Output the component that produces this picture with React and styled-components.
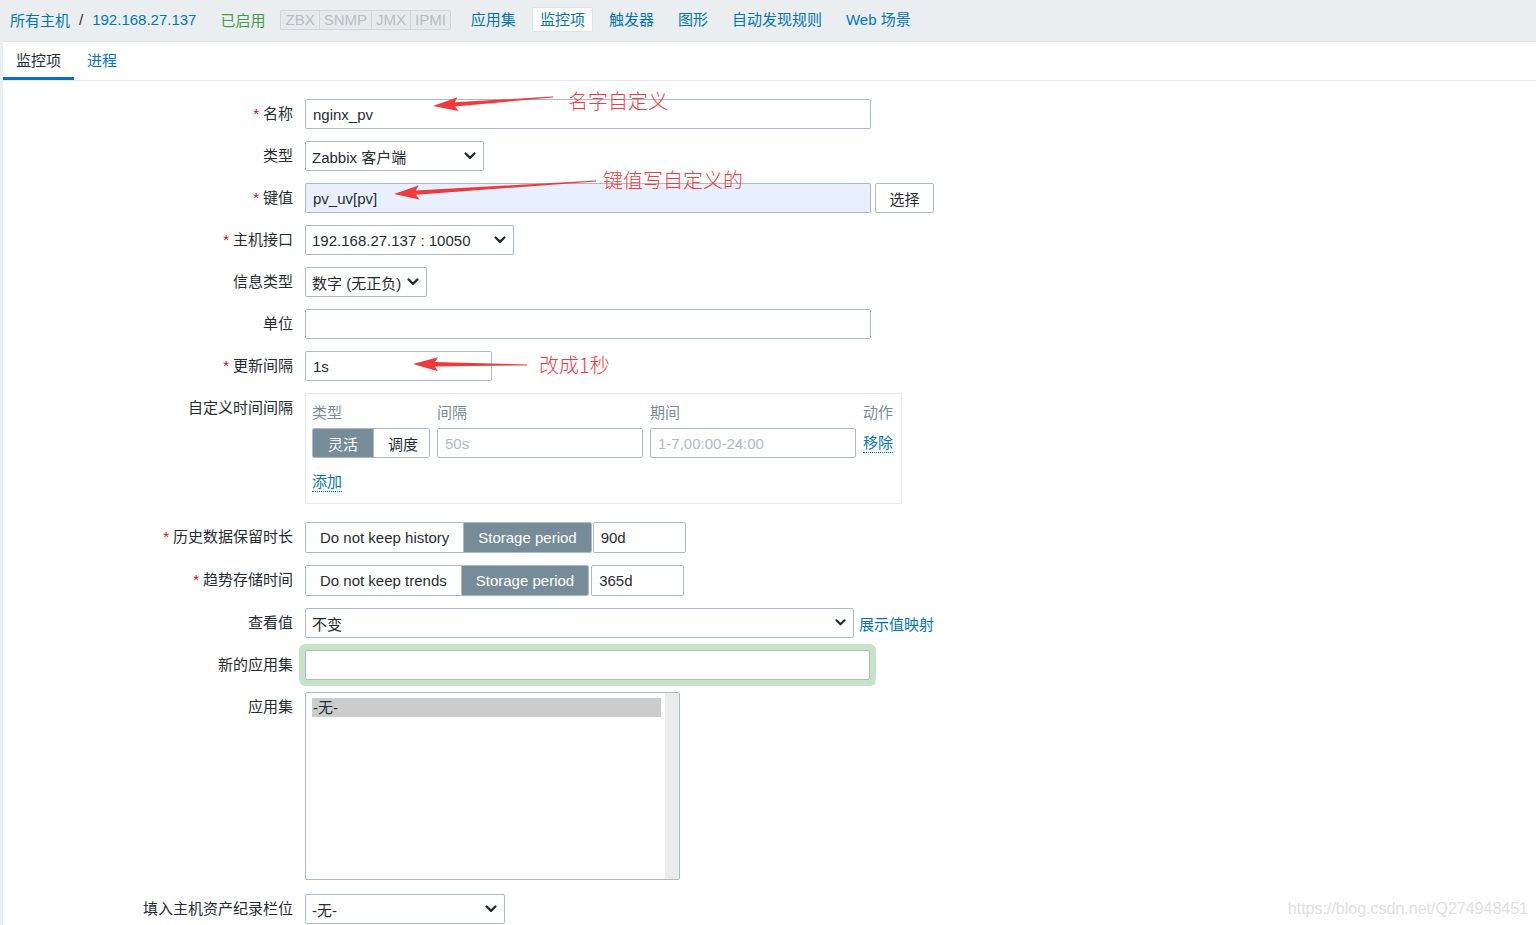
import React from "react";
import styled, { createGlobalStyle } from "styled-components";

const GlobalStyle = createGlobalStyle`
  html, body {
    margin: 0;
    padding: 0;
  }
  body {
    background: #ebeef0;
    font: 15px "Liberation Sans", "Noto Sans CJK SC", sans-serif;
    color: #1f2c33;
  }
  * {
    box-sizing: border-box;
  }
`;

const Chevron = ({ size = 12 }) => (
  <svg width={size} height={size * 0.65} viewBox="0 0 12 8" fill="none">
    <path d="M1.5 1.5 L6 6 L10.5 1.5" stroke="#1f2c33" strokeWidth="2.4" strokeLinecap="round" strokeLinejoin="round" />
  </svg>
);

const arrowPoints = (tx, ty, hx, hy) => {
  const len = Math.hypot(hx - tx, hy - ty);
  const ux = (hx - tx) / len;
  const uy = (hy - ty) / len;
  const nx = -uy;
  const ny = ux;
  const bx = hx - ux * 22;
  const by = hy - uy * 22;
  const pts = [
    [tx + nx * 0.4, ty + ny * 0.4],
    [bx + nx * 2.2, by + ny * 2.2],
    [bx - ux * 3 + nx * 7, by - uy * 3 + ny * 7],
    [hx, hy],
    [bx - ux * 3 - nx * 7, by - uy * 3 - ny * 7],
    [bx - nx * 2.2, by - ny * 2.2],
    [tx - nx * 0.4, ty - ny * 0.4],
  ];
  return pts.map((p) => p.join(",")).join(" ");
};

const App = () => {
  return (
    <Page>
      <GlobalStyle />
      <Header>
        <Crumb>所有主机</Crumb>
        <Sep>/</Sep>
        <Crumb>192.168.27.137</Crumb>
        <Status>已启用</Status>
        <Tags>
          <Tag>ZBX</Tag>
          <Tag>SNMP</Tag>
          <Tag>JMX</Tag>
          <Tag>IPMI</Tag>
        </Tags>
        <Nav>
          <NavItem>应用集</NavItem>
          <NavItem $active>监控项</NavItem>
          <NavItem>触发器</NavItem>
          <NavItem>图形</NavItem>
          <NavItem>自动发现规则</NavItem>
          <NavItem>Web 场景</NavItem>
        </Nav>
      </Header>

      <Content>
        <Tabs>
          <Tab $active>监控项</Tab>
          <Tab>进程</Tab>
        </Tabs>

        <Form>
          <Row>
            <Label $required>名称</Label>
            <Field>
              <Input $w={566} defaultValue="nginx_pv" />
            </Field>
          </Row>
          <Row>
            <Label>类型</Label>
            <Field>
              <Select $w={179}>
                <span>Zabbix 客户端</span>
                <Chevron />
              </Select>
            </Field>
          </Row>
          <Row>
            <Label $required>键值</Label>
            <Field>
              <Input $w={566} $fill="#e8f0fe" defaultValue="pv_uv[pv]" />
              <Button>选择</Button>
            </Field>
          </Row>
          <Row>
            <Label $required>主机接口</Label>
            <Field>
              <Select $w={209}>
                <span>192.168.27.137 : 10050</span>
                <Chevron />
              </Select>
            </Field>
          </Row>
          <Row>
            <Label>信息类型</Label>
            <Field>
              <Select $w={122}>
                <span>数字 (无正负)</span>
                <Chevron />
              </Select>
            </Field>
          </Row>
          <Row>
            <Label>单位</Label>
            <Field>
              <Input $w={566} defaultValue="" />
            </Field>
          </Row>
          <Row>
            <Label $required>更新间隔</Label>
            <Field>
              <Input $w={187} defaultValue="1s" />
            </Field>
          </Row>
          <Row $gap={18}>
            <Label>自定义时间间隔</Label>
            <Field>
              <PeriodBox>
                <PeriodGrid>
                  <ColHead>类型</ColHead>
                  <ColHead>间隔</ColHead>
                  <ColHead>期间</ColHead>
                  <ColHead>动作</ColHead>
                  <Segmented $h={30}>
                    <Seg $on $pad={15}>灵活</Seg>
                    <Seg $pad={14}>调度</Seg>
                  </Segmented>
                  <Input $w={206} placeholder="50s" />
                  <Input $w={206} placeholder="1-7,00:00-24:00" />
                  <Cell>
                    <DotLink>移除</DotLink>
                  </Cell>
                </PeriodGrid>
                <AddLine>
                  <DotLink>添加</DotLink>
                </AddLine>
              </PeriodBox>
            </Field>
          </Row>
          <Row>
            <Label $required>历史数据保留时长</Label>
            <Field>
              <Segmented $h={31}>
                <Seg $pad={14}>Do not keep history</Seg>
                <Seg $on $pad={14}>Storage period</Seg>
              </Segmented>
              <Input $w={93} $h={31} $ml={1} defaultValue="90d" />
            </Field>
          </Row>
          <Row>
            <Label $required>趋势存储时间</Label>
            <Field>
              <Segmented $h={31}>
                <Seg $pad={14}>Do not keep trends</Seg>
                <Seg $on $pad={14}>Storage period</Seg>
              </Segmented>
              <Input $w={93} $h={31} $ml={2} defaultValue="365d" />
            </Field>
          </Row>
          <Row>
            <Label>查看值</Label>
            <Field>
              <Select $w={549}>
                <span>不变</span>
                <Chevron size={11} />
              </Select>
              <TextLink>展示值映射</TextLink>
            </Field>
          </Row>
          <Row>
            <Label>新的应用集</Label>
            <Field>
              <Input $w={565} $glow defaultValue="" />
            </Field>
          </Row>
          <Row $gap={14}>
            <Label>应用集</Label>
            <Field>
              <ListBox>
                <ListItems>
                  <Option $on>-无-</Option>
                </ListItems>
                <Gutter />
              </ListBox>
            </Field>
          </Row>
          <Row $gap={0}>
            <Label>填入主机资产纪录栏位</Label>
            <Field>
              <Select $w={200}>
                <span>-无-</span>
                <Chevron />
              </Select>
            </Field>
          </Row>
        </Form>
      </Content>

      <Overlay>
        <svg width="1536" height="925">
          <polygon points={arrowPoints(553, 97, 433, 106)} fill="#f0393b" />
          <polygon points={arrowPoints(596, 181, 394, 194)} fill="#f0393b" />
          <polygon points={arrowPoints(527, 365, 413, 364)} fill="#f0393b" />
        </svg>
        <Note $x={568} $y={88}>名字自定义</Note>
        <Note $x={603} $y={167}>键值写自定义的</Note>
        <Note $x={539} $y={352}>改成1秒</Note>
      </Overlay>

      <Watermark>https://blog.csdn.net/Q274948451</Watermark>
    </Page>
  );
};

export default App;

const Page = styled.div`
  position: relative;
  height: 925px;
  display: flex;
  flex-direction: column;
  overflow: hidden;
`;

const Header = styled.header`
  flex-shrink: 0;
  height: 41px;
  display: flex;
  align-items: center;
  padding: 0 10px 2px;
  white-space: nowrap;
`;

const Crumb = styled.span`
  color: #0275b8;
`;

const Sep = styled.span`
  margin: 0 9px 0 9px;
  color: #1f2c33;
`;

const Status = styled.span`
  margin-left: 24px;
  color: #429e47;
`;

const Tags = styled.div`
  display: flex;
  margin-left: 15px;
  height: 20px;
  border: 1px solid #cfd7db;
  border-radius: 2px;
  background: #e6eaec;
`;

const Tag = styled.span`
  padding: 0 4px;
  line-height: 18px;
  color: #b4bfc5;
  & + & {
    border-left: 1px solid #cfd7db;
  }
`;

const Nav = styled.nav`
  display: flex;
  gap: 8px;
  margin-left: 12px;
`;

const NavItem = styled.span`
  padding: 0 7px;
  height: 25px;
  line-height: 23px;
  border: 1px solid ${(p) => (p.$active ? "#dfe4e7" : "transparent")};
  border-radius: 2px;
  background: ${(p) => (p.$active ? "#ffffff" : "transparent")};
  color: #0275b8;
`;

const Content = styled.main`
  flex: 1;
  min-height: 0;
  margin-left: 3px;
  background: #ffffff;
  border-top: 1px solid #dfe4e7;
`;

const Tabs = styled.div`
  display: flex;
  border-bottom: 1px solid #e6e9eb;
`;

const Tab = styled.div`
  height: 38px;
  padding: 0 13px;
  display: flex;
  align-items: center;
  border-bottom: 3px solid ${(p) => (p.$active ? "#0275b8" : "transparent")};
  color: ${(p) => (p.$active ? "#1f2c33" : "#0275b8")};
`;

const Form = styled.div`
  padding-top: 18px;
`;

const Row = styled.div`
  display: grid;
  grid-template-columns: 290px 1fr;
  column-gap: 12px;
  align-items: start;
  margin-bottom: ${(p) => p.$gap ?? 12}px;
`;

const Label = styled.div`
  text-align: right;
  line-height: 30px;
  white-space: nowrap;
  &::before {
    content: ${(p) => (p.$required ? '"*"' : "none")};
    color: #dc0000;
    margin-right: 4px;
  }
`;

const Field = styled.div`
  display: flex;
  align-items: center;
`;

const Input = styled.input`
  width: ${(p) => p.$w}px;
  height: ${(p) => p.$h ?? 30}px;
  margin-left: ${(p) => p.$ml ?? 0}px;
  padding: 0 7px;
  border: 1px solid #acbbc2;
  border-radius: 2px;
  background: ${(p) => p.$fill ?? "#ffffff"};
  font: inherit;
  color: #1f2c33;
  outline: none;
  box-shadow: ${(p) => (p.$glow ? "0 0 0 6px #c6e3c6" : "none")};
  &::placeholder {
    color: #acbbc2;
  }
`;

const Select = styled.div`
  width: ${(p) => p.$w}px;
  height: 30px;
  display: flex;
  align-items: center;
  justify-content: space-between;
  padding: 0 7px 0 6px;
  border: 1px solid #acbbc2;
  border-radius: 2px;
  background: #ffffff;
  white-space: nowrap;
`;

const Button = styled.div`
  margin-left: 4px;
  width: 59px;
  height: 30px;
  display: flex;
  align-items: center;
  justify-content: center;
  border: 1px solid #acbbc2;
  border-radius: 2px;
  background: #ffffff;
`;

const PeriodBox = styled.div`
  width: 597px;
  border: 1px solid #e6e9eb;
  padding: 2px 7px 9px 6px;
`;

const PeriodGrid = styled.div`
  display: grid;
  grid-template-columns: 118px 206px 206px auto;
  grid-template-rows: 30px 30px;
  column-gap: 7px;
  row-gap: 2px;
  align-items: center;
`;

const ColHead = styled.div`
  color: #768d99;
`;

const Cell = styled.div`
  display: flex;
  align-items: center;
`;

const Segmented = styled.div`
  display: inline-flex;
  height: ${(p) => p.$h}px;
  border: 1px solid #acbbc2;
  border-radius: 2px;
  overflow: hidden;
`;

const Seg = styled.div`
  display: flex;
  align-items: center;
  padding: 0 ${(p) => p.$pad}px;
  white-space: nowrap;
  background: ${(p) => (p.$on ? "#768d99" : "#ffffff")};
  color: ${(p) => (p.$on ? "#ffffff" : "#1f2c33")};
  & + & {
    border-left: 1px solid #acbbc2;
  }
`;

const DotLink = styled.span`
  color: #0275b8;
  line-height: 19px;
  border-bottom: 1px dotted #0275b8;
`;

const AddLine = styled.div`
  margin-top: 12px;
  height: 24px;
  display: flex;
  align-items: center;
`;

const TextLink = styled.span`
  margin-left: 5px;
  color: #0275b8;
  white-space: nowrap;
`;

const ListBox = styled.div`
  width: 375px;
  height: 188px;
  display: flex;
  border: 1px solid #acbbc2;
  border-radius: 2px;
  overflow: hidden;
`;

const ListItems = styled.div`
  flex: 1;
  padding: 5px 4px 0 6px;
`;

const Option = styled.div`
  height: 19px;
  line-height: 19px;
  padding-left: 1px;
  background: ${(p) => (p.$on ? "#cccccc" : "transparent")};
`;

const Gutter = styled.div`
  width: 14px;
  background: #ebebeb;
`;

const Overlay = styled.div`
  position: absolute;
  inset: 0;
  pointer-events: none;
`;

const Note = styled.span`
  position: absolute;
  left: ${(p) => p.$x}px;
  top: ${(p) => p.$y}px;
  font: 20px "Noto Sans CJK SC", "Liberation Sans", sans-serif;
  font-weight: 300;
  line-height: 26px;
  color: #f53b3b;
  white-space: nowrap;
`;

const Watermark = styled.span`
  position: absolute;
  right: 8px;
  bottom: 7px;
  font: 16px "Liberation Sans", sans-serif;
  color: #e0e0e0;
`;
